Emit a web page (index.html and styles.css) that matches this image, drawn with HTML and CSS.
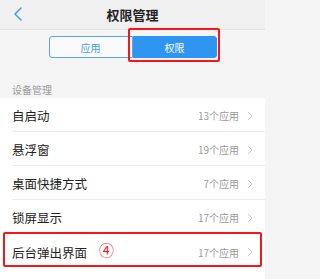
FILE: index.html
```html
<!DOCTYPE html>
<html lang="zh">
<head>
<meta charset="utf-8">
<link rel="stylesheet" href="styles.css">
</head>
<body>
<div class="page">
  <header class="topbar">
    <span class="back">
      <svg width="10" height="14" viewBox="0 0 10 14"><path d="M8 1 L2 7 L8 13" fill="none" stroke="#4a9ee8" stroke-width="1.6" stroke-linecap="round" stroke-linejoin="round"/></svg>
    </span>
    <h1 class="title">权限管理</h1>
  </header>
  <div class="tabs">
    <div class="seg">
      <span class="tab">应用</span>
      <span class="tab active">权限<span class="mark-box tab-mark"></span></span>
    </div>
  </div>
  <div class="section-label">设备管理</div>
  <ul class="list">
    <li class="row"><span class="name">自启动</span><span class="count">13个应用</span><span class="chev"><svg width="6" height="10" viewBox="0 0 6 10"><path d="M1 1 L5 5 L1 9" fill="none" stroke="#c8c8c8" stroke-width="1"/></svg></span></li>
    <li class="row"><span class="name">悬浮窗</span><span class="count">19个应用</span><span class="chev"><svg width="6" height="10" viewBox="0 0 6 10"><path d="M1 1 L5 5 L1 9" fill="none" stroke="#c8c8c8" stroke-width="1"/></svg></span></li>
    <li class="row"><span class="name">桌面快捷方式</span><span class="count">7个应用</span><span class="chev"><svg width="6" height="10" viewBox="0 0 6 10"><path d="M1 1 L5 5 L1 9" fill="none" stroke="#c8c8c8" stroke-width="1"/></svg></span></li>
    <li class="row"><span class="name">锁屏显示</span><span class="count">17个应用</span><span class="chev"><svg width="6" height="10" viewBox="0 0 6 10"><path d="M1 1 L5 5 L1 9" fill="none" stroke="#c8c8c8" stroke-width="1"/></svg></span></li>
    <li class="row marked"><span class="name">后台弹出界面</span><span class="num">④</span><span class="count">17个应用</span><span class="chev"><svg width="6" height="10" viewBox="0 0 6 10"><path d="M1 1 L5 5 L1 9" fill="none" stroke="#c8c8c8" stroke-width="1"/></svg></span><span class="mark-box row-mark"></span></li>
  </ul>
</div>
</body>
</html>
```

FILE: styles.css
```css
* { box-sizing: border-box; }
html, body { margin: 0; padding: 0; }
body {
  width: 265px;
  height: 279px;
  overflow: hidden;
  background: #f5f5f5;
  font-family: "Noto Sans CJK SC", "Noto Sans", sans-serif;
}
.page {
  height: 279px;
  display: flex;
  flex-direction: column;
}
.topbar {
  position: relative;
  height: 30px;
  flex: none;
  background: #f0f0f0;
  border-bottom: 1px solid #e4e4e4;
  display: flex;
  align-items: center;
  justify-content: center;
}
.back {
  position: absolute;
  left: 13px;
  top: 7px;
  display: flex;
}
.title {
  margin: 0;
  font-size: 13px;
  font-weight: 700;
  color: #222;
  line-height: 30px;
}
.tabs {
  flex: none;
  display: flex;
  justify-content: center;
  padding-top: 6px;
}
.seg {
  display: flex;
}
.tab {
  position: relative;
  width: 84px;
  height: 22px;
  display: flex;
  align-items: center;
  justify-content: center;
  font-size: 10px;
  color: #4a9ee8;
  background: #fafafa;
  border: 1px solid #5aa6ea;
  border-radius: 3px 0 0 3px;
}
.tab.active {
  background: #2e95f0;
  border-color: #2e95f0;
  color: #fff;
  border-radius: 0 3px 3px 0;
}
.mark-box {
  position: absolute;
  border: 2px solid #f5161a;
  border-radius: 2px;
}
.tab-mark {
  left: -6px;
  right: -4px;
  top: -9px;
  bottom: -5px;
}
.section-label {
  flex: none;
  padding: 25px 12px 0;
  height: 40px;
  line-height: 14px;
  font-size: 10px;
  color: #9a9a9a;
}
.list {
  flex: 1;
  margin: 0;
  padding: 0;
  list-style: none;
  background: #fff;
}
.row {
  position: relative;
  height: 34px;
  margin-left: 12px;
  padding-right: 12px;
  padding-top: 2px;
  display: flex;
  align-items: center;
  border-bottom: 1px solid #ececec;
}
.row.marked { border-bottom: none; }
.name {
  flex: 1;
  font-size: 12.5px;
  color: #222;
}
.count {
  font-size: 10px;
  color: #9a9a9a;
}
.chev {
  display: flex;
  margin-left: 8px;
}
.num {
  position: absolute;
  left: 87px;
  top: 6px;
  font-size: 15px;
  line-height: 20px;
  color: #f5161a;
}
.row-mark {
  left: -9px;
  right: 3px;
  top: -2px;
  bottom: 1px;
}
```
